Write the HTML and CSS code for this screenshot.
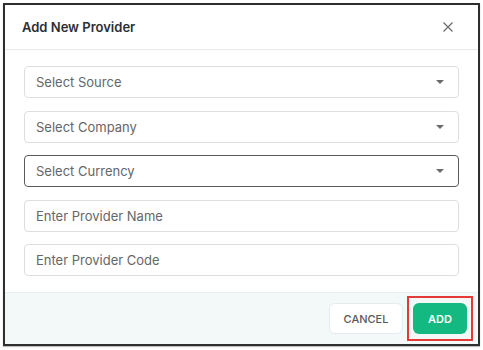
FILE: index.html
```html
<!DOCTYPE html>
<html lang="en">
<head>
    <meta charset="UTF-8">
    <meta name="viewport" content="width=device-width, initial-scale=1.0">
    <title>Add New Provider</title>
    <link rel="stylesheet" href="styles.css">
</head>
<body>
    <div class="modal">
        <div class="modal-header">
            <h2 class="modal-title">Add New Provider</h2>
            <button class="close-btn" aria-label="Close">
                <svg width="10" height="10" viewBox="0 0 10 10">
                    <path d="M0.5 0.5 L9.5 9.5 M9.5 0.5 L0.5 9.5" stroke="#6b6b6b" stroke-width="1.2" fill="none"/>
                </svg>
            </button>
        </div>

        <div class="modal-body">
            <div class="field select">
                <span class="placeholder">Select Source</span>
                <span class="caret"></span>
            </div>
            <div class="field select">
                <span class="placeholder">Select Company</span>
                <span class="caret"></span>
            </div>
            <div class="field select focused">
                <span class="placeholder">Select Currency</span>
                <span class="caret"></span>
            </div>
            <div class="field">
                <span class="placeholder">Enter Provider Name</span>
            </div>
            <div class="field">
                <span class="placeholder">Enter Provider Code</span>
            </div>
        </div>

        <div class="modal-footer">
            <button class="btn btn-cancel">CANCEL</button>
            <button class="btn btn-add">ADD</button>
        </div>
    </div>
</body>
</html>
```

FILE: styles.css
```css
body {
    margin: 0;
    padding: 3px;
    font-family: Inter, "Noto Sans", Arial, sans-serif;
    background-color: #fff;
    color: #333;
}
.modal {
    width: 477px;
    height: 343px;
    box-sizing: border-box;
    border: 2px solid #2e2e2e;
    background-color: #fff;
    display: flex;
    flex-direction: column;
    box-shadow: 0 1px 1px rgba(0, 0, 0, 0.25);
}
.modal-header {
    height: 44px;
    display: flex;
    align-items: center;
    justify-content: space-between;
    padding: 0 25px 0 17px;
    border-bottom: 1px solid #e9ecee;
}
.modal-title {
    margin: 0;
    font-size: 13px;
    font-weight: 600;
    color: #2b2f33;
}
.close-btn {
    border: none;
    background: none;
    padding: 0;
    width: 10px;
    height: 10px;
    display: flex;
    cursor: pointer;
}
.modal-body {
    flex: 1;
    padding: 16px 19px 0 19px;
    display: flex;
    flex-direction: column;
    gap: 12.5px;
}
.field {
    height: 32px;
    box-sizing: border-box;
    border: 1px solid #dcdfe2;
    border-radius: 4px;
    display: flex;
    align-items: center;
    justify-content: space-between;
    padding: 0 12px 0 11px;
}
.field.focused {
    border-color: #5a5a5a;
}
.placeholder {
    font-size: 13px;
    color: #666;
}
.caret {
    width: 0;
    height: 0;
    border-left: 4.5px solid transparent;
    border-right: 4.5px solid transparent;
    border-top: 4.5px solid #6a6a6a;
    margin-right: 2px;
}
.modal-footer {
    height: 52px;
    box-sizing: border-box;
    background-color: #f3f8f9;
    border-top: 1px solid #e9eef0;
    display: flex;
    align-items: center;
    justify-content: flex-end;
    gap: 10px;
    padding: 0 11px 0 0;
}
.btn {
    height: 31px;
    border-radius: 6px;
    font-family: inherit;
    font-size: 11px;
    font-weight: 500;
    cursor: pointer;
}
.btn-cancel {
    width: 74px;
    background-color: #fff;
    border: 1px solid #e8ebee;
    color: #55595e;
}
.btn-add {
    position: relative;
    width: 54px;
    background-color: #13b981;
    border: none;
    color: #fff;
    font-weight: 600;
}
/* highlight box drawn around the add button */
.btn-add::after {
    content: "";
    position: absolute;
    top: -7px;
    left: -6px;
    right: -6px;
    bottom: -7px;
    border: 2px solid #e53935;
}
```
